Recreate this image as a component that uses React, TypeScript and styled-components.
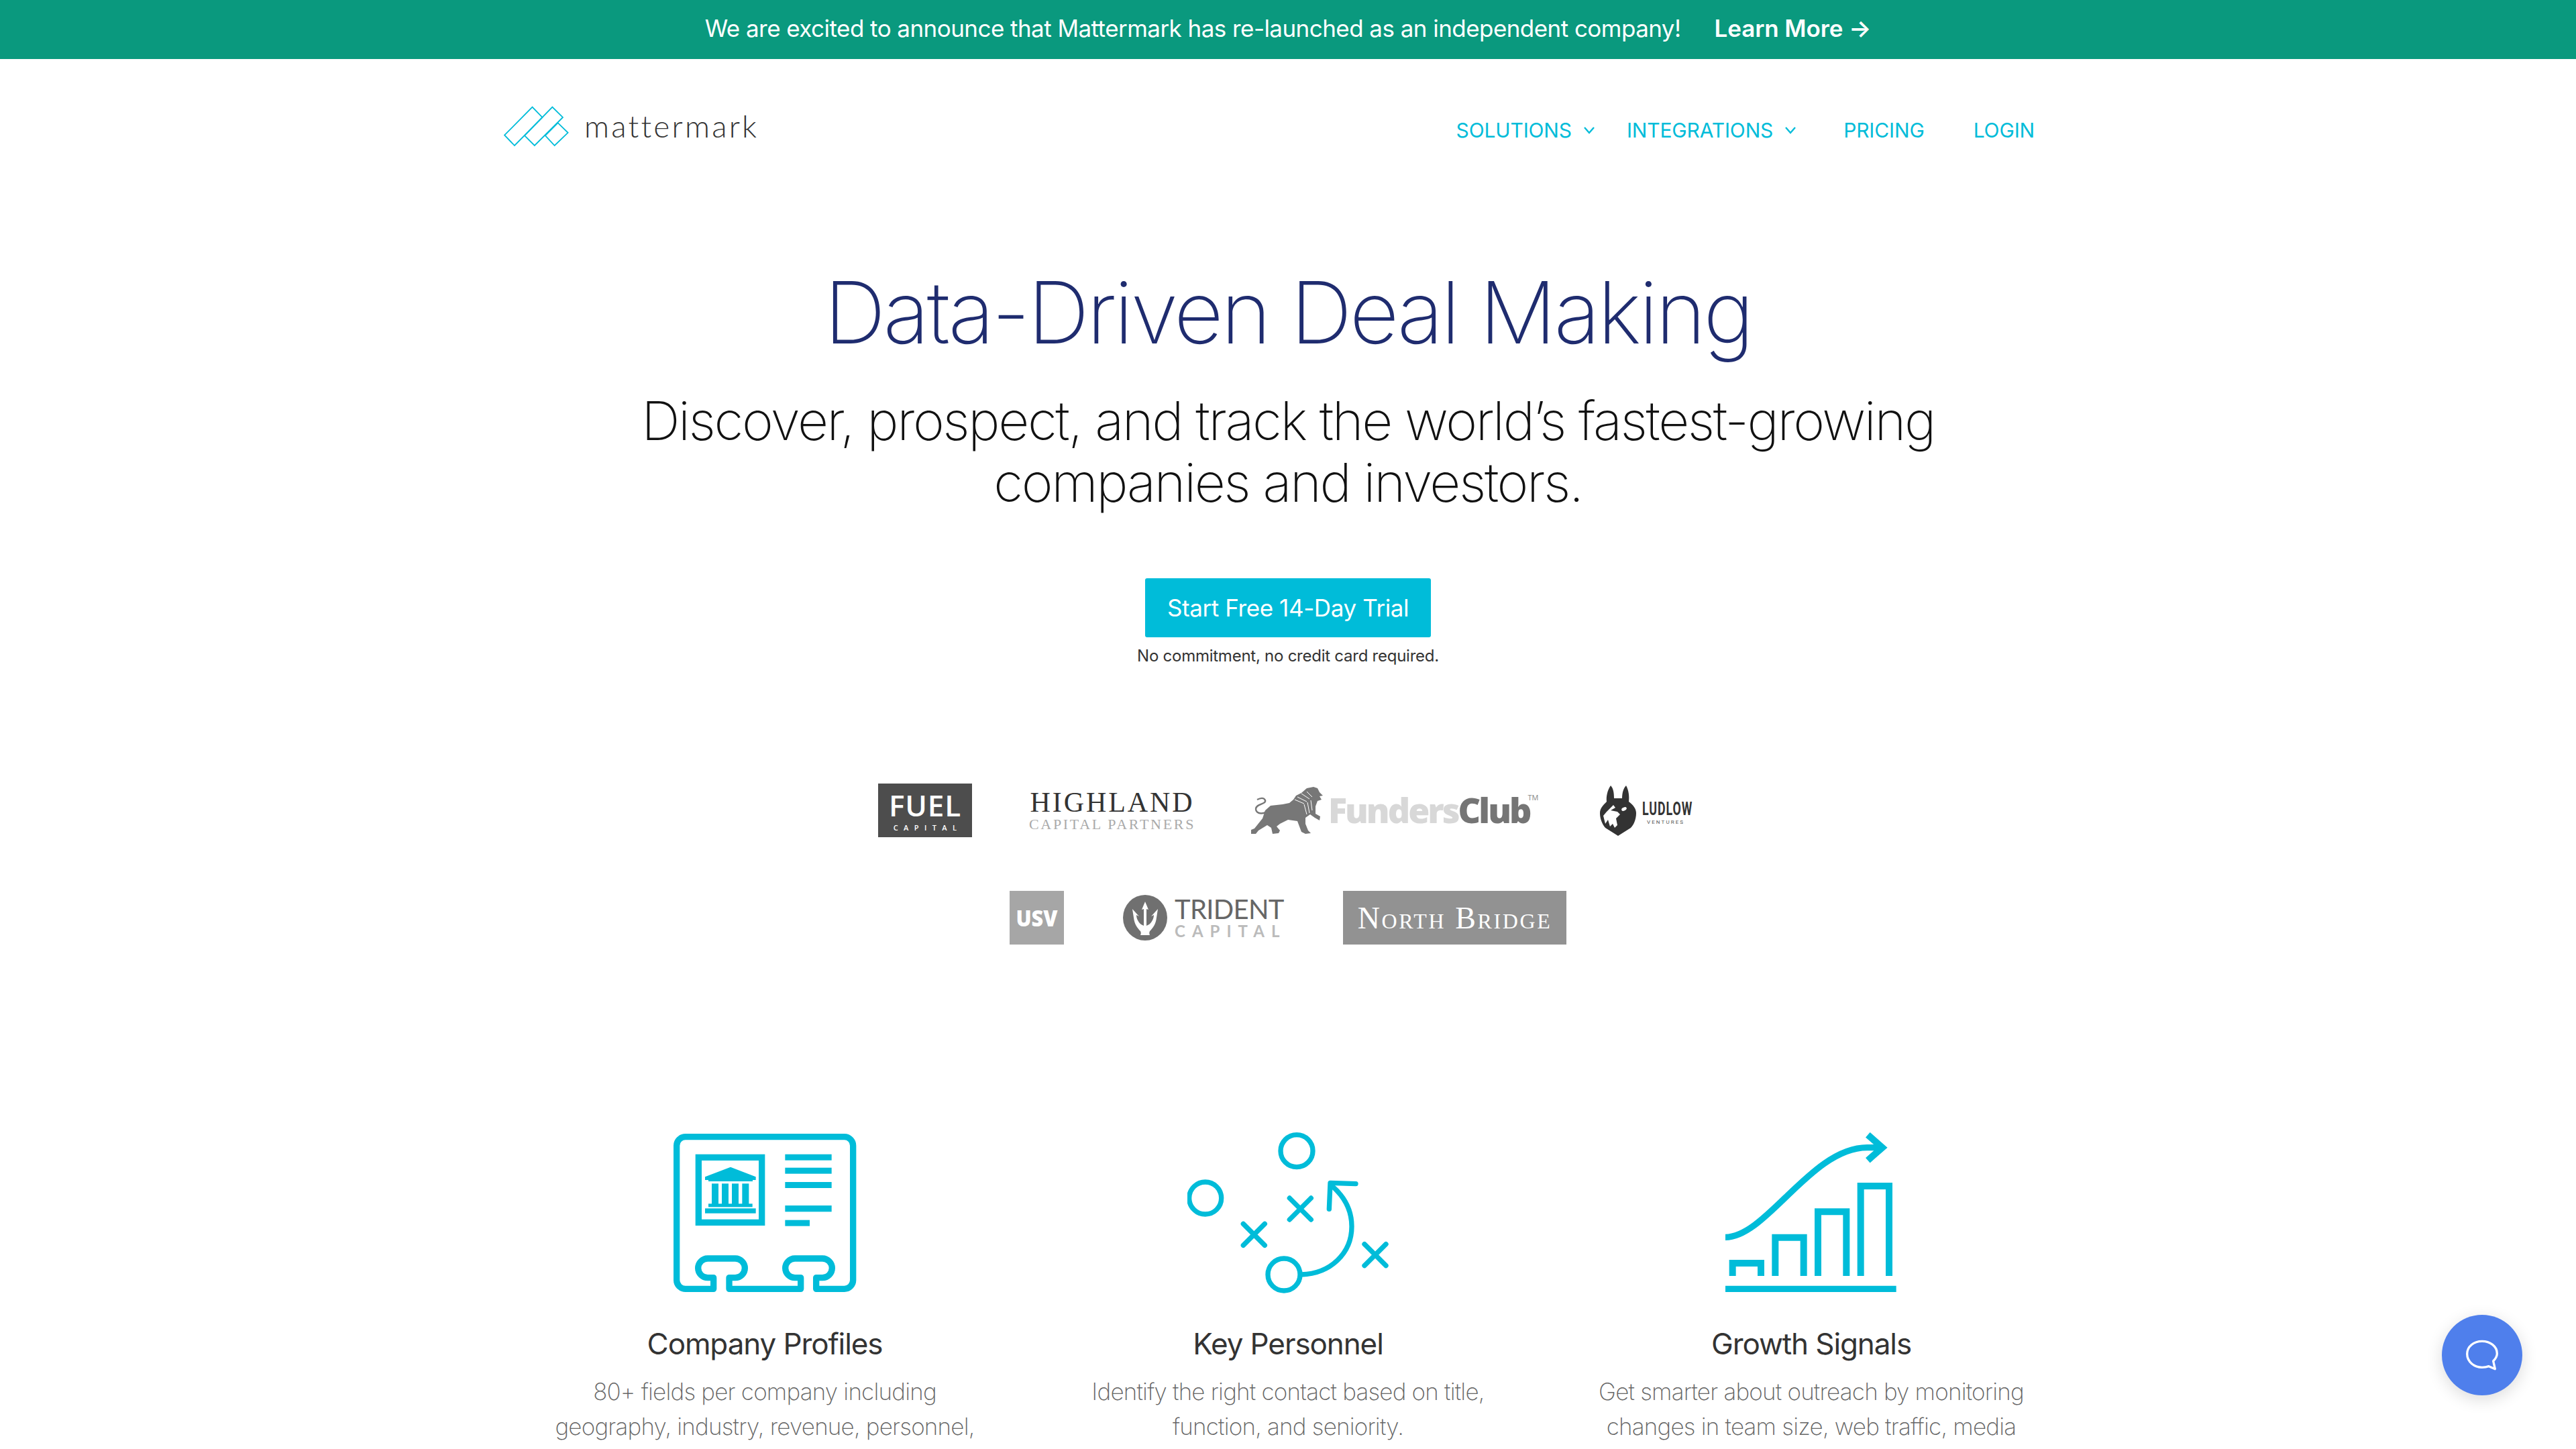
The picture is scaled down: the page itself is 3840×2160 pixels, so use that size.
import React from "react";
import styled, { createGlobalStyle } from "styled-components";

const Global = createGlobalStyle`
  html, body { margin: 0; padding: 0; background: #fff; }
  body { font-family: "Inter", "Liberation Sans", sans-serif; height: 2160px; overflow: hidden; }
  #root { height: 2160px; overflow: hidden; position: relative; }
`;

const CYAN = "#00bcd9";

const Banner = styled.div`
  height: 88px; box-sizing: border-box; padding-bottom: 4px; background: #0a997e; color: #fff;
  display: flex; align-items: center; justify-content: center; gap: 50px;
  font-size: 35px; font-weight: 400; letter-spacing: -0.55px;
`;
const BannerLink = styled.a`font-weight: 600; color: #fff; letter-spacing: -0.1px;`;

const Header = styled.header`
  height: 200px; box-sizing: border-box; padding: 0 807px 0 750px;
  display: flex; align-items: center; justify-content: space-between;
`;
const Brand = styled.div`display: flex; align-items: center; gap: 22px;`;
const BrandName = styled.span`
  font-family: "Lato", sans-serif; font-weight: 300; font-size: 46px; line-height: 60px;
  color: #333; letter-spacing: 3.2px;
`;
const Nav = styled.nav`display: flex; align-items: center; padding-top: 12px;`;
const NavLink = styled.a<{ $gap: number }>`
  display: flex; align-items: center; gap: 17px;
  color: ${CYAN}; font-size: 30px; line-height: 40px; letter-spacing: -0.15px;
  margin-left: ${(p) => p.$gap}px;
`;

const Hero = styled.section`display: flex; flex-direction: column; align-items: center;`;
const Title = styled.h1`
  margin: 103px 0 -1px; font-size: 128px; line-height: 150px; font-weight: 250; color: #1f2c6f;
  letter-spacing: -3.7px;
`;
const Sub = styled.h2`
  margin: 41px 0 0; font-size: 80px; line-height: 92px; font-weight: 250; color: #111; text-align: center;
  letter-spacing: -2.4px;
`;
const Cta = styled.a`
  margin-top: 97px; height: 88px; width: 426px; background: ${CYAN}; color: #fff; border-radius: 3px;
  display: flex; align-items: center; justify-content: center; font-size: 35px; letter-spacing: -0.4px;
`;
const Note = styled.div`margin-top: 12px; font-size: 24px; line-height: 32px; color: #333; letter-spacing: -0.25px;`;

const LogoRow = styled.div<{ $top: number }>`
  display: flex; justify-content: center; align-items: center; gap: 88px; height: 80px;
  margin-top: ${(p) => p.$top}px;
`;
const Fuel = styled.div`
  width: 140px; height: 80px; background: #4d4d4d; color: #fff;
  display: flex; flex-direction: column; align-items: center;
  font-family: "Open Sans", sans-serif;
`;
const FuelBig = styled.span`font-size: 44px; line-height: 44px; font-weight: 600; margin-top: 10px; letter-spacing: 0.8px;`;
const FuelSmall = styled.span`font-size: 11px; line-height: 12px; font-weight: 600; letter-spacing: 8.4px; margin-right: -8px; margin-top: 6px;`;
const Highland = styled.div`
  width: 239px; display: flex; flex-direction: column; align-items: center;
  font-family: "Liberation Serif", serif;
`;
const HighBig = styled.span`font-size: 42px; line-height: 40px; color: #333; letter-spacing: 2.9px; margin-right: -3px; white-space: nowrap;`;
const HighSmall = styled.span`font-size: 22px; line-height: 22px; color: #aaa; letter-spacing: 2.7px; margin-right: -3px; white-space: nowrap; margin-top: 2px;`;
const Funders = styled.div`width: 433px; display: flex; align-items: center; gap: 6px;`;
const FundersName = styled.span`
  font-family: "Open Sans", sans-serif; font-weight: 800; font-size: 52px; line-height: 60px;
  letter-spacing: -3px; color: #d8d8d8; white-space: nowrap; margin-top: -3px;
`;
const FundersClub = styled.span`color: #757575;`;
const Tm = styled.sup`font-size: 11px; font-weight: 400; letter-spacing: 0; color: #888; vertical-align: 34px; line-height: 0; margin-left: -3px;`;
const Ludlow = styled.div`width: 146px; display: flex; align-items: center; gap: 9px;`;
const LudlowText = styled.div`display: flex; flex-direction: column; align-items: flex-start; font-family: "Roboto", sans-serif; margin-top: 8px;`;
const LudlowBig = styled.span`font-size: 27px; line-height: 24px; font-weight: 700; color: #333; transform: scaleX(0.66); transform-origin: left; letter-spacing: 1.4px;`;
const LudlowSmall = styled.span`font-size: 8px; line-height: 10px; color: #555; letter-spacing: 2.1px; margin: 3px 0 0 7px; white-space: nowrap;`;
const Usv = styled.div`
  width: 81px; height: 80px; background: #a6a6a6; color: #fff; display: flex; align-items: center; justify-content: center;
  font-family: "Open Sans", sans-serif; font-weight: 800; font-size: 34px;
`;
const Squeeze = styled.span`display: inline-block; transform: scaleX(0.9);`;
const Trident = styled.div`width: 240px; display: flex; align-items: center; gap: 11px;`;
const TridentText = styled.div`display: flex; flex-direction: column; font-family: "Lato", sans-serif;`;
const TridentBig = styled.span`font-size: 40px; line-height: 38px; color: #666; letter-spacing: -0.7px; white-space: nowrap;`;
const TridentSmall = styled.span`font-size: 24px; line-height: 24px; color: #bbb; letter-spacing: 10px; font-weight: 700; white-space: nowrap; margin-top: 2px;`;
const NorthBridge = styled.div`
  width: 333px; height: 80px; background: #929292; color: #fff; display: flex; align-items: center; justify-content: center;
  font-family: "Liberation Serif", serif; font-variant: small-caps; font-size: 46px; letter-spacing: 2.6px; white-space: nowrap;
`;

const Features = styled.section`display: grid; grid-template-columns: repeat(3, 780px); justify-content: center; margin-top: 280px;`;
const Feature = styled.article`display: flex; flex-direction: column; align-items: center; text-align: center;`;
const FeatureIcon = styled.svg`width: 300px; height: 240px; display: block;`;
const FeatureTitle = styled.h3`margin: 45px 0 0; font-size: 44px; line-height: 60px; font-weight: 400; color: #333; letter-spacing: -1.1px;`;
const FeatureBody = styled.p`margin: 15px 0 0; font-size: 35px; line-height: 52px; font-weight: 200; color: #666; letter-spacing: -0.8px; white-space: nowrap;`;

const Chat = styled.button`
  position: absolute; left: 3640px; top: 1960px; width: 120px; height: 120px; border-radius: 50%; border: 0; padding: 0;
  background: #4f7fec; box-shadow: 0 6px 24px rgba(0,0,0,.14); display: flex; align-items: center; justify-content: center;
`;

const Chevron = () => (
  <svg width="18" height="12" viewBox="0 0 18 12" fill="none" stroke={CYAN} strokeWidth="2.4"><path d="M2 2l7 8 7-8" /></svg>
);

const Mark = () => (
  <svg width="99" height="61" viewBox="30 52 296 184" fill="none" stroke={CYAN} strokeWidth="5.5" strokeLinejoin="miter">
    <path d="M35 183L160 57L205 103L80 230Z" />
    <path d="M125 185L250 57L297 103L170 230Z" />
    <path d="M218 185L275 128L320 172L260 230Z" />
  </svg>
);

const Lion = () => (
  <svg width="110" height="72" viewBox="0 0 110 72" style={{ flex: "none" }}>
    <path fill="none" stroke="#777" strokeWidth="2.4" d="M30 32C22 44 8 42 8 34C8 26 24 27 22 21C20 16 14 18 10 20" />
    <path fill="#777" d="M94 1L100 3L103 9L108 14L103 15L106 20L100 22L97 30L97 41L104 45L103 51L96 47L89 42L82 47L82 56L86 66L90 70L82 71L76 68L70 52L56 50L44 56L39 60L44 66L42 70L33 71L31 62L25 58L12 66L8 71L1 71L1 65L6 63L18 48L22 36L30 29L48 27L58 25L64 20L68 14L76 10L84 3Z" />
    <path fill="none" stroke="#fff" strokeWidth="1" d="M66 20L80 26M70 16L84 23M76 11L88 19M80 27L84 42M85 24L88 40M90 21L92 36M84 8L92 16" />
  </svg>
);

const Wolf = () => (
  <svg width="54" height="76" viewBox="0 0 54 76" style={{ flex: "none" }}>
    <path fill="#333" d="M16 1C20 5 21 12 21 20L33 20C33 12 35 5 39 1C43 8 44 18 43 25C50 30 54 36 54 42C54 52 50 60 46 64L27 76L8 64C3 58 0 50 0 42C0 35 5 30 10 25C9 18 11 8 16 1Z" />
    <path fill="#fff" d="M20 30L10 40L5 46L8 58L12 52L15 62L19 58L22 64L26 60L24 50L30 44L26 40L16 38L23 34Z" />
    <ellipse cx="36" cy="36" rx="4" ry="2.4" fill="#fff" transform="rotate(-25 36 36)" />
  </svg>
);

const TridentMark = () => (
  <svg width="66" height="68" viewBox="0 0 66 68" style={{ flex: "none" }}>
    <ellipse cx="33" cy="34" rx="33" ry="34" fill="#707070" />
    <path fill="#fff" d="M33 10L38 22L35 21L35 46L39 44C44 40 46 34 46 30L42 32L52 21L50 34C49 44 44 50 40 54C39 56 39 58 40 60L26 60C27 58 27 56 26 54C22 50 17 44 16 34L14 21L24 32L20 30C20 34 22 40 27 44L31 46L31 21L28 22Z" />
  </svg>
);

const ProfileIcon = () => (
  <FeatureIcon viewBox="90 84 900 720" fill="none">
    <path stroke={CYAN} strokeWidth="28" strokeLinejoin="round" d="M146 143a39 39 0 0 1 39-39H896a39 39 0 0 1 39 39V745a39 39 0 0 1-39 39H770V734H798a43 43 0 0 0 0-86H675a43 43 0 0 0 0 86H701V784H381V734H408a43 43 0 0 0 0-86H285a43 43 0 0 0 0 86H311V784H185a39 39 0 0 1-39-39Z" />
    <rect x="244" y="196" width="283" height="291" stroke={CYAN} strokeWidth="28" />
    <g fill={CYAN}>
      <path d="M387 239L500 283V297H486V303H288V297H273V283Z" />
      <rect x="303" y="313" width="30" height="92" /><rect x="348" y="313" width="30" height="92" />
      <rect x="393" y="313" width="30" height="92" /><rect x="439" y="313" width="30" height="92" />
      <rect x="288" y="403" width="197" height="15" /><rect x="273" y="424" width="227" height="22" />
      <rect x="631" y="182" width="208" height="27" /><rect x="631" y="242" width="208" height="27" />
      <rect x="631" y="306" width="208" height="27" /><rect x="631" y="411" width="208" height="28" />
      <rect x="631" y="476" width="110" height="27" />
    </g>
  </FeatureIcon>
);

const cross = (x: number, y: number) => `M${x - 48} ${y - 48}L${x + 48} ${y + 48}M${x + 48} ${y - 48}L${x - 48} ${y + 48}`;

const PlayIcon = () => (
  <FeatureIcon viewBox="90 84 900 720" fill="none" stroke={CYAN} strokeWidth="22" strokeLinecap="round" strokeLinejoin="round">
    <circle cx="579" cy="167" r="72" />
    <circle cx="170" cy="378" r="72" />
    <circle cx="522" cy="720" r="72" />
    <path d={cross(595, 426)} /><path d={cross(388, 541)} /><path d={cross(930, 632)} />
    <path d="M600 720C730 716 825 625 825 505C825 430 790 370 738 325" />
    <path d="M843 314L729 310L724 427" />
  </FeatureIcon>
);

const GrowthIcon = () => (
  <FeatureIcon viewBox="90 84 900 720" fill="none" stroke={CYAN} strokeWidth="30">
    <path d="M188 726V669H315V726M379 726V554H506V726M570 726V439H697V726M761 726V324H888V726" />
    <path d="M156 798H920V770H156Z" fill={CYAN} stroke="none" />
    <path strokeWidth="28" d="M156 553C340 553 540 152 790 152H850" />
    <path d="M793 95L858 152L793 209" />
  </FeatureIcon>
);

export default function App() {
  return (
    <>
      <Global />
      <Banner>
        <span>We are excited to announce that Mattermark has re-launched as an independent company!</span>
        <BannerLink>Learn More →</BannerLink>
      </Banner>
      <Header>
        <Brand><Mark /><BrandName>mattermark</BrandName></Brand>
        <Nav>
          <NavLink $gap={0}>SOLUTIONS <Chevron /></NavLink>
          <NavLink $gap={47}>INTEGRATIONS <Chevron /></NavLink>
          <NavLink $gap={70}>PRICING</NavLink>
          <NavLink $gap={73}>LOGIN</NavLink>
        </Nav>
      </Header>
      <Hero>
        <Title>Data-Driven Deal Making</Title>
        <Sub>Discover, prospect, and track the world’s fastest-growing<br />companies and investors.</Sub>
        <Cta>Start Free 14-Day Trial</Cta>
        <Note>No commitment, no credit card required.</Note>
      </Hero>
      <LogoRow $top={174}>
        <Fuel><FuelBig>FUEL</FuelBig><FuelSmall>CAPITAL</FuelSmall></Fuel>
        <Highland><HighBig>HIGHLAND</HighBig><HighSmall>CAPITAL PARTNERS</HighSmall></Highland>
        <Funders><Lion /><FundersName>Funders<FundersClub>Club</FundersClub><Tm>TM</Tm></FundersName></Funders>
        <Ludlow><Wolf /><LudlowText><LudlowBig>LUDLOW</LudlowBig><LudlowSmall>VENTURES</LudlowSmall></LudlowText></Ludlow>
      </LogoRow>
      <LogoRow $top={80}>
        <Usv><Squeeze>USV</Squeeze></Usv>
        <Trident><TridentMark /><TridentText><TridentBig>TRIDENT</TridentBig><TridentSmall>CAPITAL</TridentSmall></TridentText></Trident>
        <NorthBridge>North Bridge</NorthBridge>
      </LogoRow>
      <Features>
        <Feature>
          <ProfileIcon />
          <FeatureTitle>Company Profiles</FeatureTitle>
          <FeatureBody>80+ fields per company including<br />geography, industry, revenue, personnel,</FeatureBody>
        </Feature>
        <Feature>
          <PlayIcon />
          <FeatureTitle>Key Personnel</FeatureTitle>
          <FeatureBody>Identify the right contact based on title,<br />function, and seniority.</FeatureBody>
        </Feature>
        <Feature>
          <GrowthIcon />
          <FeatureTitle>Growth Signals</FeatureTitle>
          <FeatureBody>Get smarter about outreach by monitoring<br />changes in team size, web traffic, media</FeatureBody>
        </Feature>
      </Features>
      <Chat aria-label="Chat">
        <svg width="48" height="48" viewBox="228 232 144 136" fill="none" stroke="#fff" strokeWidth="10" strokeLinejoin="round">
          <path d="M350 327C362 314 367 305 367 293C367 260 335 238 300 238C262 238 233 262 233 295C233 330 265 355 300 355C310 355 320 354 330 350L358 362Z" />
        </svg>
      </Chat>
    </>
  );
}
